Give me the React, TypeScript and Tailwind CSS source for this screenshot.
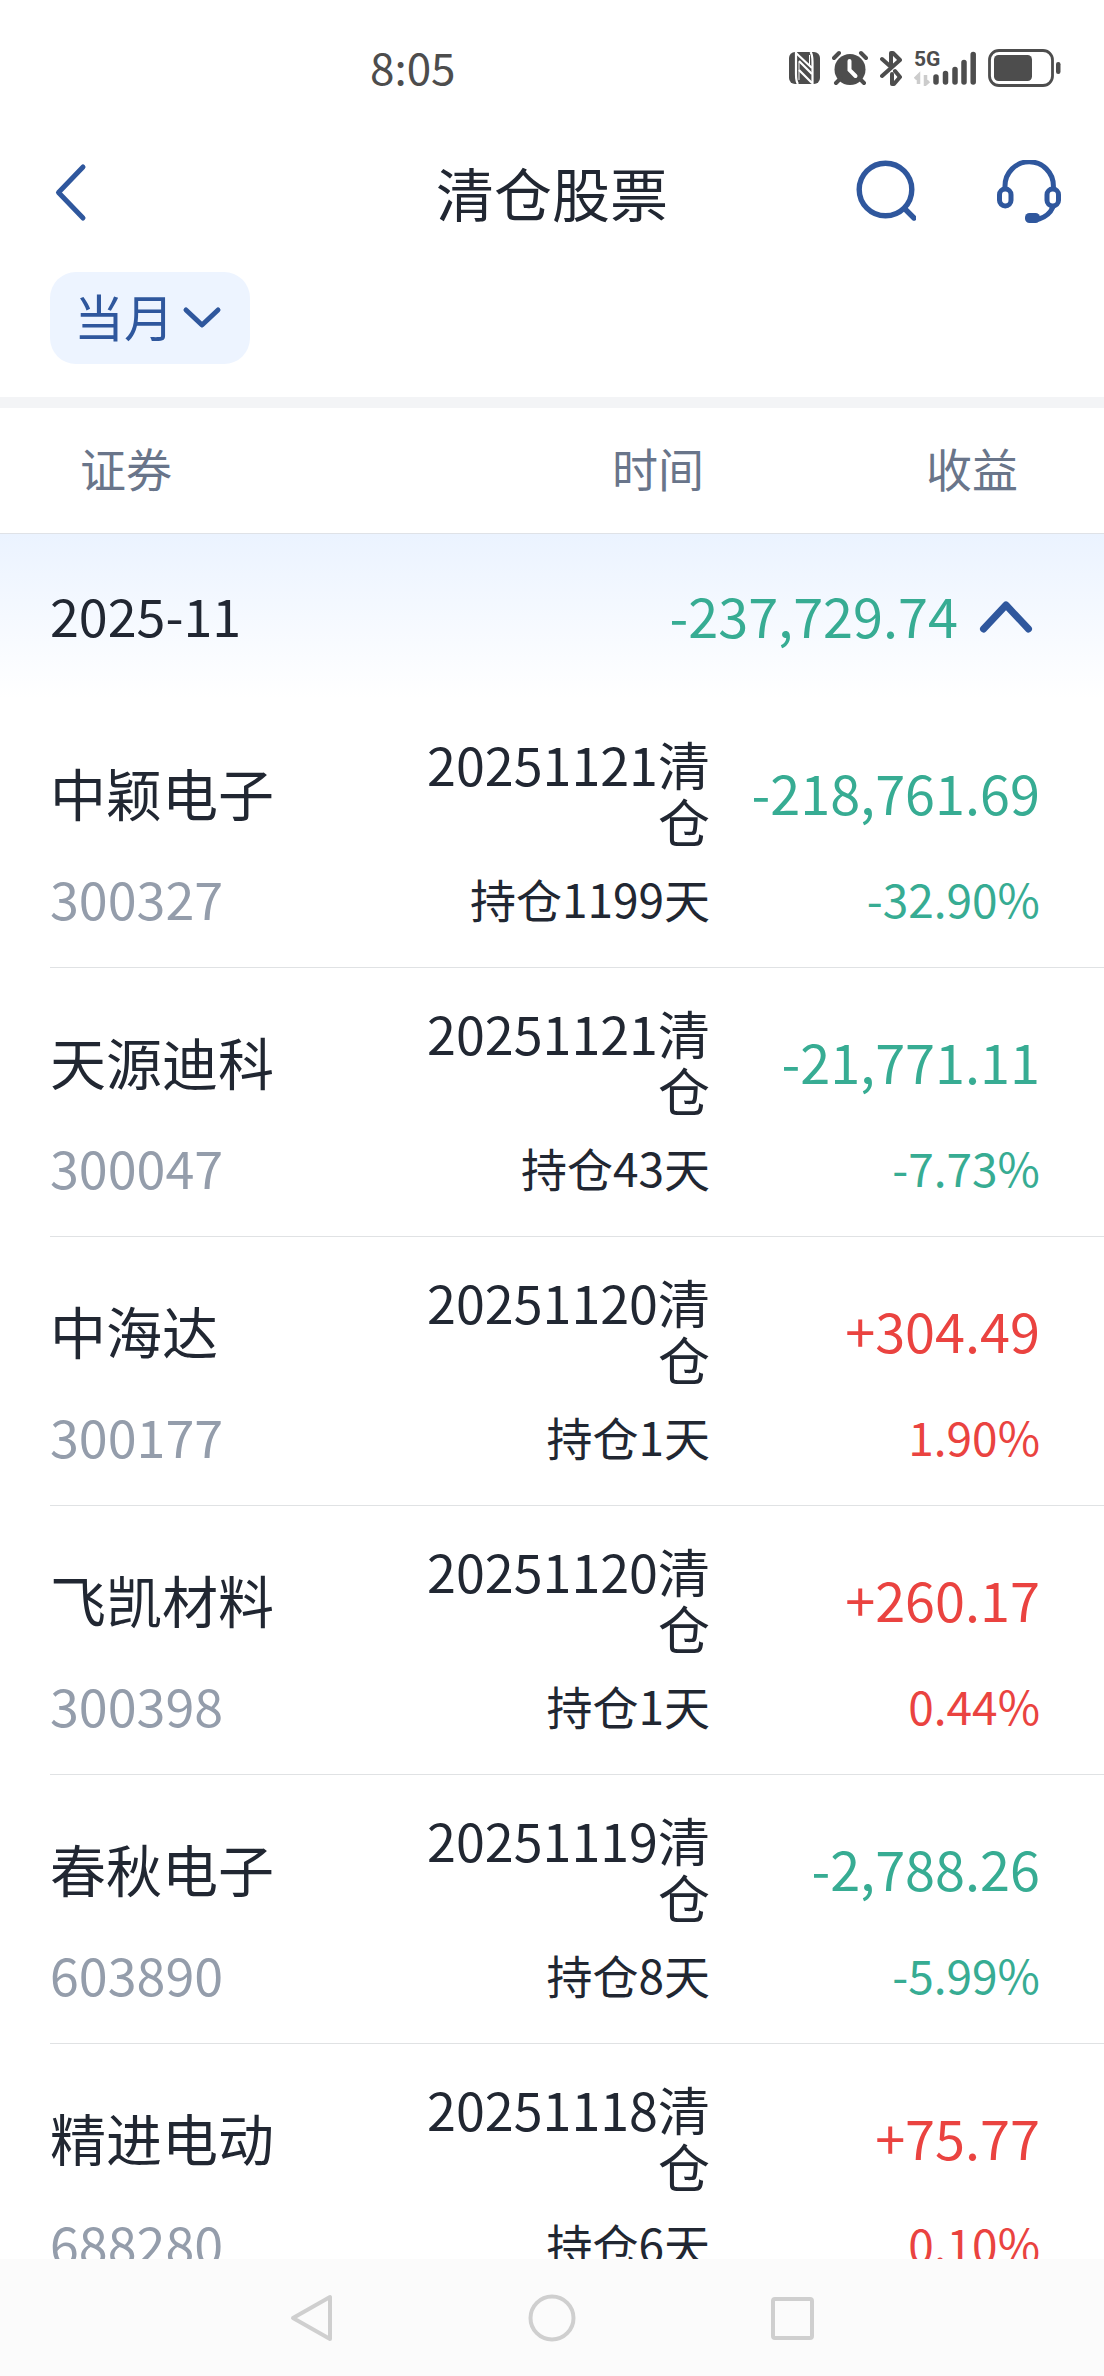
import React, { useState } from 'react';

type Stock = {
  name: string;
  code: string;
  closedOn: string;
  days: number;
  profit: string;
  rate: string;
};

const STOCKS: Stock[] = [
  { name: '中颖电子', code: '300327', closedOn: '20251121', days: 1199, profit: '-218,761.69', rate: '-32.90%' },
  { name: '天源迪科', code: '300047', closedOn: '20251121', days: 43, profit: '-21,771.11', rate: '-7.73%' },
  { name: '中海达', code: '300177', closedOn: '20251120', days: 1, profit: '+304.49', rate: '1.90%' },
  { name: '飞凯材料', code: '300398', closedOn: '20251120', days: 1, profit: '+260.17', rate: '0.44%' },
  { name: '春秋电子', code: '603890', closedOn: '20251119', days: 8, profit: '-2,788.26', rate: '-5.99%' },
  { name: '精进电动', code: '688280', closedOn: '20251118', days: 6, profit: '+75.77', rate: '0.10%' },
];

const StatusBar: React.FC = () => (
  <div className="flex h-[136px] shrink-0 items-center justify-between pl-[370px] pr-[43px] text-[#4d4d4d]">
    <span className="pb-1 text-[44px] leading-[44px]">8:05</span>
    <div className="flex items-center gap-3">
      {/* NFC */}
      <svg className="h-9 w-8" viewBox="0 0 32 36">
        <rect x="1" y="2" width="31" height="32" rx="6" fill="currentColor" />
        <path d="M8 2v22c0 5 .5 8 2 10M24.500 34V12c0-5-.5-8-2-10" fill="none" stroke="#fff" strokeWidth="2.200" />
        <path d="M8 3l16 15M11 11l13 13M11 20l13 13" stroke="#fff" strokeWidth="2.200" />
        <path d="M11 12v18M21.500 5v10" stroke="#fff" strokeWidth="1" />
      </svg>
      {/* Alarm */}
      <svg className="h-9 w-9" viewBox="0 0 36 36" fill="none" stroke="currentColor" strokeLinecap="round">
        <circle cx="18" cy="19.500" r="15.500" fill="currentColor" stroke="none" />
        <path d="M2 8l5-5M34 8l-5-5M4 33l5-5M32 33l-5-5" strokeWidth="4" />
        <path d="M17.500 11v9l6 6" stroke="#fff" strokeWidth="4" />
      </svg>
      {/* Bluetooth */}
      <svg className="h-9 w-[22px]" viewBox="0 0 22 36" fill="none" stroke="currentColor" strokeWidth="4" strokeLinecap="round" strokeLinejoin="round">
        <path d="M2 9l9 8V3h2l7 7-18 16M12 24v10h2l6-7-5-6" />
      </svg>
      {/* Signal */}
      <div className="relative h-9 w-[62px]">
        <span className="absolute left-0 top-0 font-[Roboto,sans-serif] text-[21px] font-bold leading-[18px]">5G</span>
        <svg className="h-9 w-full" viewBox="0 0 62 36" fill="none" stroke="currentColor" strokeWidth="5.500" strokeLinecap="round">
          <path d="M22 27v5M31.500 23.500V32M41 19.500V32M50 12.500V32M59.200 4.500V32" />
          <path d="M1 29l3.500-3.500V34M15 31l-3.500 3V25" stroke="#ccc" strokeWidth="3.500" strokeLinecap="butt" />
        </svg>
      </div>
      {/* Battery */}
      <svg className="h-[38px] w-[73px]" viewBox="0 0 73 38" fill="none">
        <rect x="1.500" y="1.500" width="63" height="35" rx="9.500" stroke="currentColor" strokeWidth="2.800" />
        <rect x="6" y="6" width="38" height="26" rx="4.500" fill="currentColor" />
        <rect x="68" y="13" width="4.500" height="12" rx="2.200" fill="currentColor" />
      </svg>
    </div>
  </div>
);

const Header: React.FC = () => (
  <header className="grid h-28 shrink-0 grid-cols-[1fr_auto_1fr] items-center px-[42px]">
    <button aria-label="返回" className="w-14 pl-3 text-[#2f579d]">
      <svg className="h-16 w-9" viewBox="0 0 36 64" fill="none" stroke="currentColor" strokeWidth="5" strokeLinecap="round" strokeLinejoin="round">
        <path d="M29 7L4.500 32.500 29 58" />
      </svg>
    </button>
    <h1 className="text-[58px] leading-[64px]">清仓股票</h1>
    <div className="flex items-center justify-end gap-20 text-[#2f579d]">
      <button aria-label="搜索">
        <svg className="h-16 w-[60px]" viewBox="0 0 60 64" fill="none" stroke="currentColor" strokeWidth="5.400" strokeLinecap="round">
          <circle cx="29.500" cy="29.500" r="26.300" />
          <path d="M49 49l9 9" />
        </svg>
      </button>
      <button aria-label="客服">
        <svg className="h-16 w-[66px]" viewBox="0 0 66 64" fill="none" stroke="currentColor" strokeWidth="5" strokeLinecap="round">
          <path d="M9 28v-2a24.200 24.200 0 0 1 48.400 0v2" strokeLinecap="butt" />
          <rect x="3.500" y="29" width="11.500" height="17" rx="5.700" />
          <rect x="51" y="29" width="11.500" height="17" rx="5.700" />
          <path d="M57 47q-4 9-14 12" />
          <rect x="29" y="53" width="15" height="10" rx="4.500" fill="currentColor" stroke="none" />
        </svg>
      </button>
    </div>
  </header>
);

const StockRow: React.FC<{ stock: Stock }> = ({ stock }) => {
  const color = stock.profit.startsWith('-') ? 'text-[#37ac93]' : 'text-[#ea4340]';

  return (
    <tr>
      <td className="p-0">
        <div className="ml-[50px] border-b border-[#e0e2e4] pb-[38px] pt-9">
          <div className="flex h-[114px] items-center text-[56px] leading-[64px]">{stock.name}</div>
          <div className="mt-[18px] text-[52px] leading-[62px] text-[#949dab]">{stock.code}</div>
        </div>
      </td>
      <td className="p-0 text-right">
        <div className="border-b border-[#e0e2e4] pb-[38px] pt-9">
          <div className="h-[114px] text-[52px] leading-[57px]">{stock.closedOn}清仓</div>
          <div className="mt-[18px] text-[46px] leading-[62px]">持仓{stock.days}天</div>
        </div>
      </td>
      <td className={`p-0 text-right ${color}`}>
        <div className="border-b border-[#e0e2e4] pb-[38px] pr-16 pt-9">
          <div className="flex h-[114px] items-center justify-end text-[54px] leading-[64px]">{stock.profit}</div>
          <div className="mt-[18px] text-[46px] leading-[62px]">{stock.rate}</div>
        </div>
      </td>
    </tr>
  );
};

const NavBar: React.FC = () => (
  <nav className="flex h-[117px] shrink-0 items-center justify-center gap-48 bg-[#fbfbfb] text-[#cfcfcf]">
    <button aria-label="后退">
      <svg className="size-12" viewBox="0 0 48 48" fill="none" stroke="currentColor" strokeWidth="4" strokeLinejoin="round">
        <path d="M42 3v42L5 24z" />
      </svg>
    </button>
    <button aria-label="主页">
      <svg className="size-12" viewBox="0 0 48 48" fill="none" stroke="currentColor" strokeWidth="4">
        <circle cx="24" cy="24" r="21.500" />
      </svg>
    </button>
    <button aria-label="最近任务">
      <svg className="size-12" viewBox="0 0 48 48" fill="none" stroke="currentColor" strokeWidth="4">
        <rect x="5" y="5" width="39" height="39" rx="2" />
      </svg>
    </button>
  </nav>
);

const App: React.FC = () => {
  const [expanded, setExpanded] = useState(true);

  return (
    <div className="flex h-screen flex-col overflow-hidden bg-white font-['Noto_Sans_CJK_SC',sans-serif] text-[#212732]">
      <StatusBar />
      <Header />

      <div className="shrink-0 border-b-[11px] border-[#f3f4f6] pb-[33px] pl-[50px] pt-6">
        <button className="flex h-[92px] items-center gap-2 rounded-[26px] bg-[#edf4ff] pl-6 pr-7 text-[50px] text-[#2f579d]">
          <span className="pb-1.5 leading-[60px]">当月</span>
          <svg className="h-6 w-10" viewBox="0 0 40 24" fill="none" stroke="currentColor" strokeWidth="5" strokeLinecap="round" strokeLinejoin="round">
            <path d="M4 4l16 15L36 4" />
          </svg>
        </button>
      </div>

      <main className="min-h-0 flex-1 overflow-y-auto [scrollbar-width:none]">
        <table className="w-full table-fixed border-separate border-spacing-0">
          <colgroup>
            <col />
            <col className="w-[310px]" />
            <col className="w-[394px]" />
          </colgroup>
          <thead className="text-[46px] leading-[60px] text-[#69758a]">
            <tr>
              <th className="border-b border-[#dfe2e7] pb-9 pl-20 pr-0 pt-[29px] text-left font-normal">证券</th>
              <th className="border-b border-[#dfe2e7] pb-9 pl-0 pr-1.5 pt-[29px] text-right font-normal">时间</th>
              <th className="border-b border-[#dfe2e7] pb-9 pl-0 pr-[86px] pt-[29px] text-right font-normal">收益</th>
            </tr>
          </thead>
          <tbody>
            <tr>
              <th colSpan={3} scope="rowgroup" className="p-0 font-normal">
                <button
                  onClick={() => setExpanded(!expanded)}
                  aria-expanded={expanded}
                  className="flex h-[165px] w-full items-center justify-between bg-linear-to-b from-[#ebf3ff] to-white pl-[50px] pr-[70px]"
                >
                  <span className="pb-1 text-[52px] leading-[60px]">2025-11</span>
                  <span className="flex items-center gap-5 text-[54px] leading-[60px] text-[#37ac93]">
                    <span className="pb-1">-237,729.74</span>
                    <svg className={`h-9 w-14 text-[#2f579d] ${expanded ? '' : 'rotate-180'}`} viewBox="0 0 56 36" fill="none" stroke="currentColor" strokeWidth="7" strokeLinecap="round" strokeLinejoin="round">
                      <path d="M5.500 30L28 6l22.500 24" />
                    </svg>
                  </span>
                </button>
              </th>
            </tr>
            {expanded && STOCKS.map(stock => <StockRow key={stock.code} stock={stock} />)}
          </tbody>
        </table>
      </main>

      <NavBar />
    </div>
  );
};

export default App;
